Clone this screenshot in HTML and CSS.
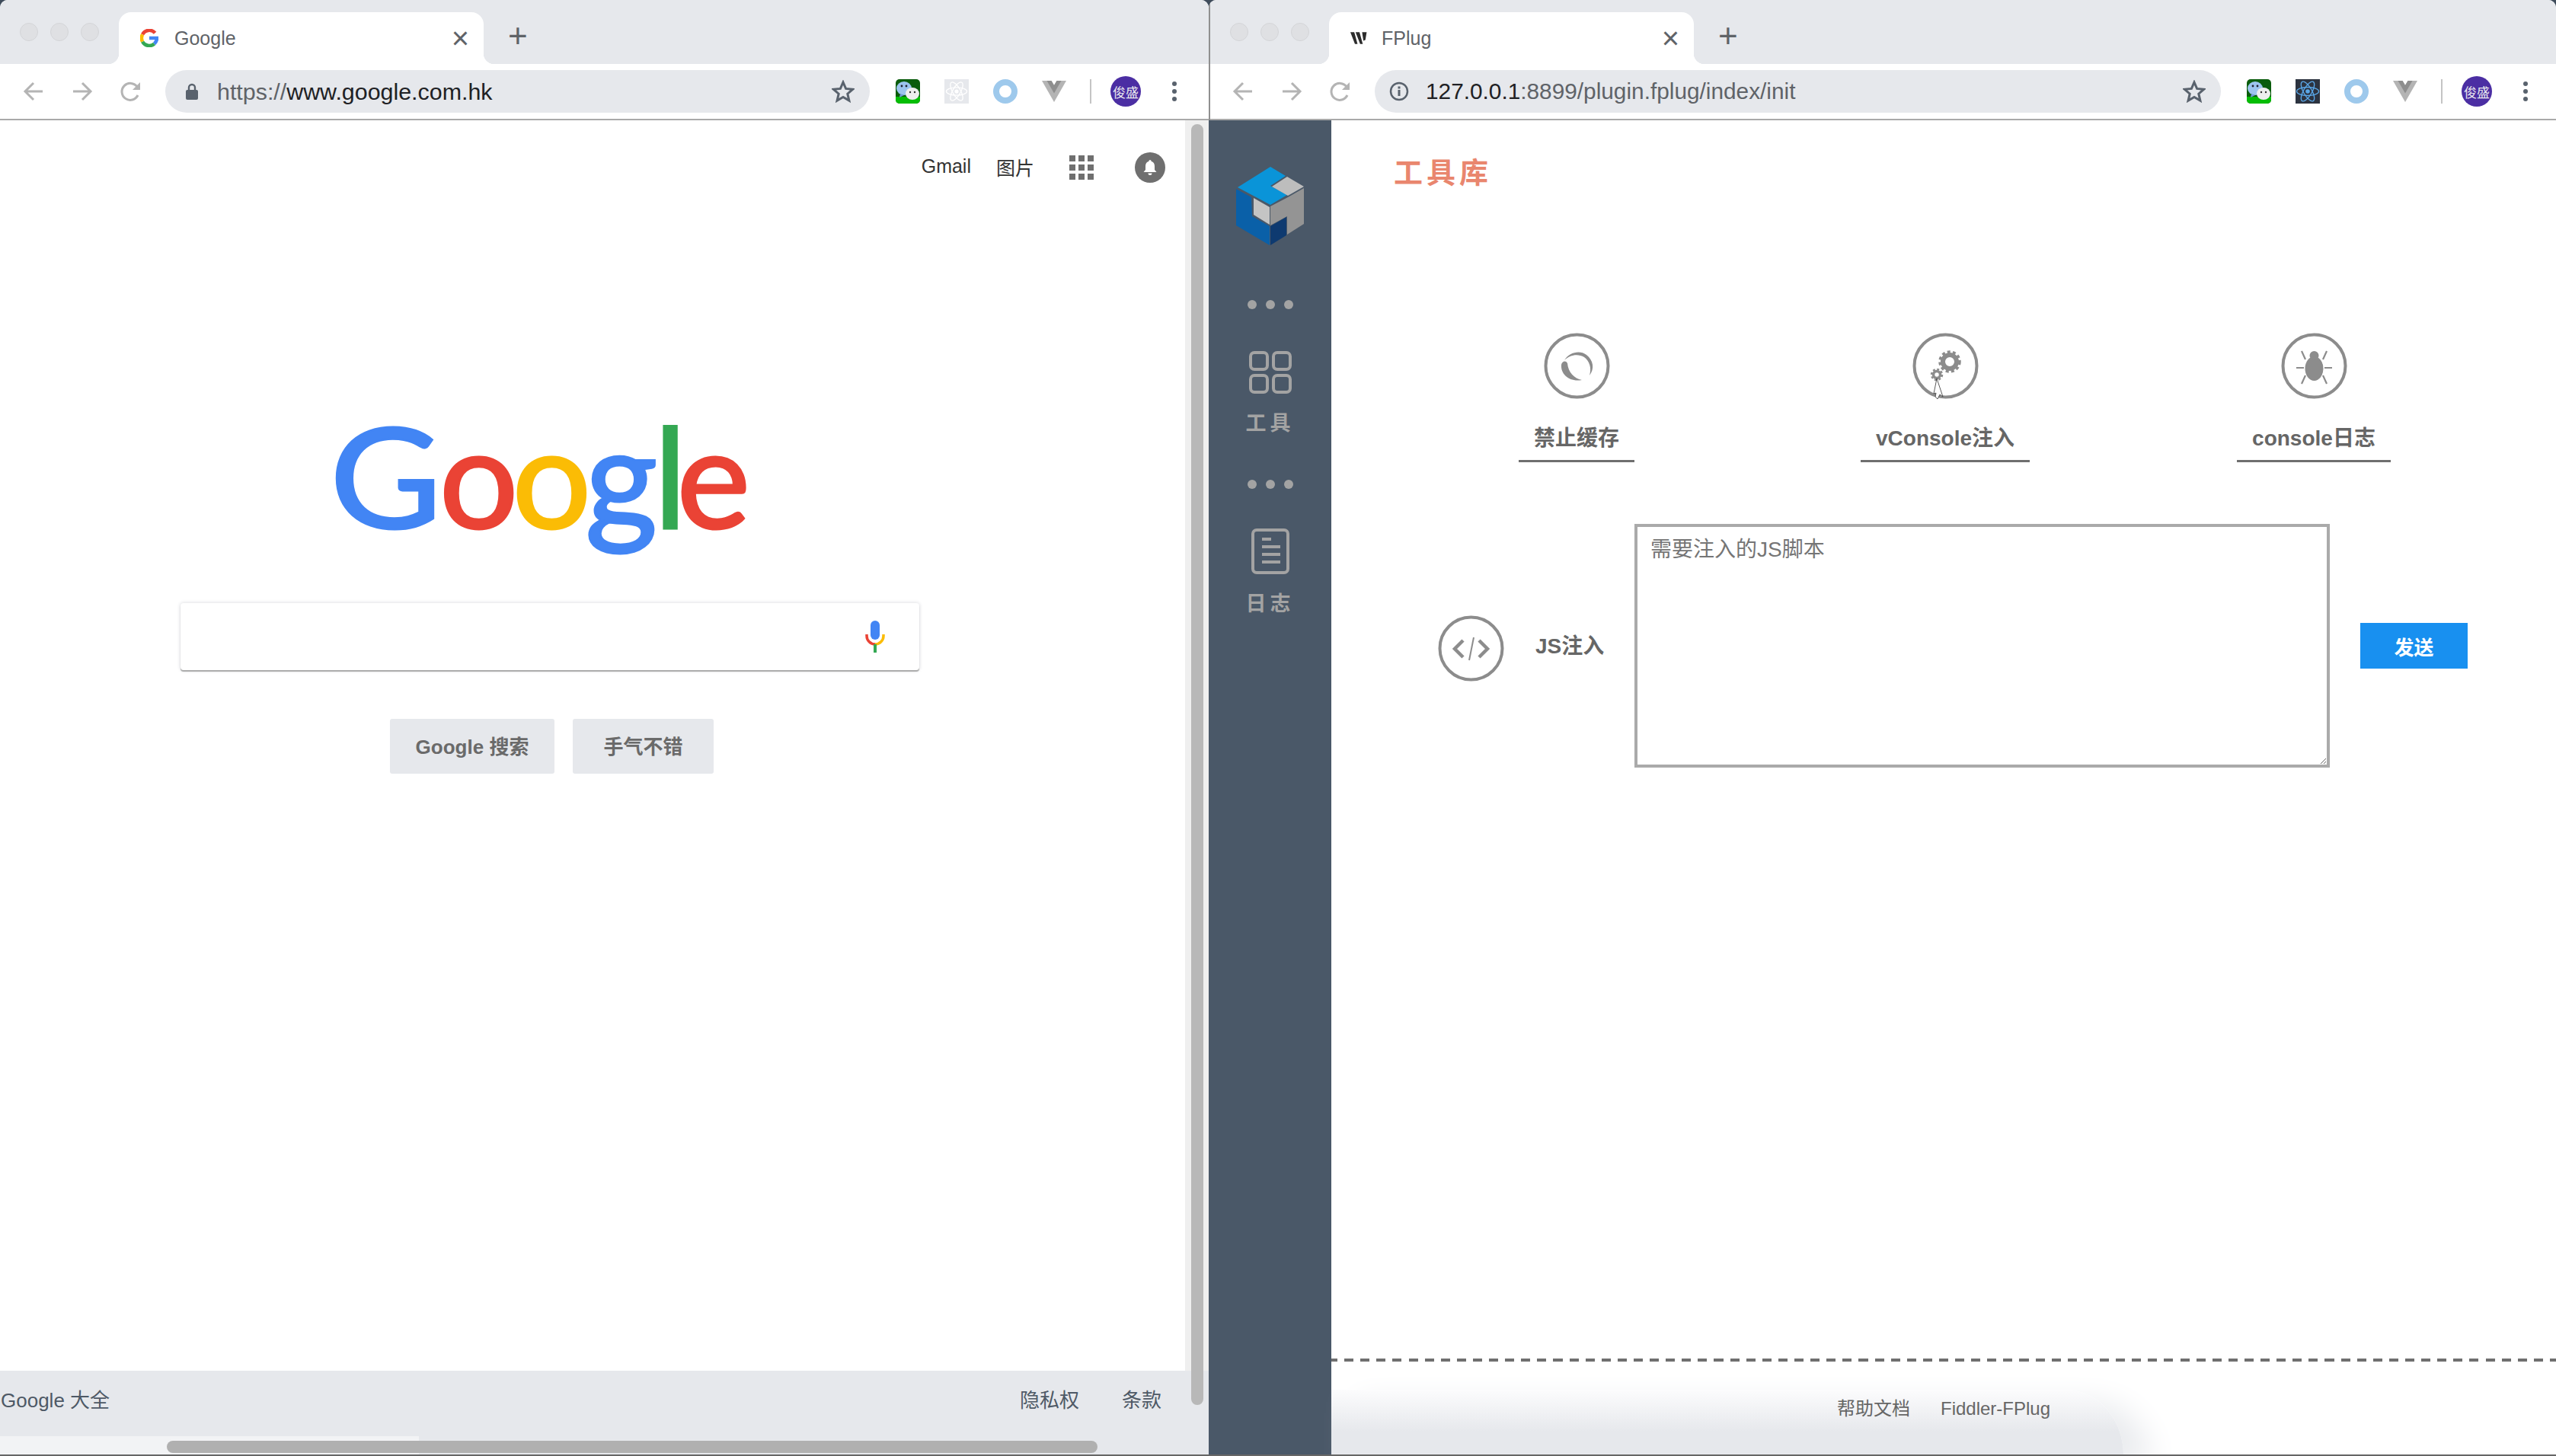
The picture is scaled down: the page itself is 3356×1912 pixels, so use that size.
FILE: index.html
```html
<!DOCTYPE html>
<html lang="zh-CN">
<head>
  <meta charset="UTF-8">
  <title>Google / FPlug</title>
  <link rel="stylesheet" href="styles.css">
</head>
<body>
  <svg class="defs" width="0" height="0">
    <symbol id="i-back" viewBox="0 0 28 28"><path d="M26 14H3M14 3L3 14l11 11" fill="none" stroke="#b4b4b4" stroke-width="3"/></symbol>
    <symbol id="i-forward" viewBox="0 0 28 28"><path d="M2 14h23M14 3l11 11-11 11" fill="none" stroke="#b4b4b4" stroke-width="3"/></symbol>
    <symbol id="i-reload" viewBox="0 0 28 28"><path d="M23 19a11 11 0 1 1-1-11" fill="none" stroke="#b4b4b4" stroke-width="3"/><path d="M26 2v10H16z" fill="#b4b4b4"/></symbol>
    <symbol id="i-star" viewBox="0 0 30 30"><path d="M15 3l3.6 8.4 9.1.8-6.9 6 2.1 8.9-7.9-4.7-7.9 4.7 2.1-8.9-6.9-6 9.1-.8z" fill="none" stroke="#59626d" stroke-width="3"/></symbol>
    <symbol id="i-wechat" viewBox="0 0 32 32">
      <rect width="32" height="32" rx="5" fill="#0a5c0c"/>
      <path d="M0 23h32v4a5 5 0 0 1-5 5H5a5 5 0 0 1-5-5z" fill="#05bd05"/>
      <ellipse cx="11" cy="12" rx="10" ry="9" fill="#9cc4ee"/>
      <path d="M6 19l-1 5 6-3z" fill="#6f9bd6"/>
      <ellipse cx="22" cy="19" rx="9" ry="8" fill="#eeeeee"/>
      <circle cx="8" cy="9" r="1.4" fill="#223"/><circle cx="14" cy="9" r="1.4" fill="#223"/>
      <circle cx="19" cy="17" r="1.2" fill="#333"/><circle cx="25" cy="17" r="1.2" fill="#333"/>
    </symbol>
    <symbol id="i-atom" viewBox="0 0 32 32">
      <g fill="none" stroke="currentColor" stroke-width="1.4">
        <ellipse cx="16" cy="16" rx="14.5" ry="5.5"/>
        <ellipse cx="16" cy="16" rx="14.5" ry="5.5" transform="rotate(60 16 16)"/>
        <ellipse cx="16" cy="16" rx="14.5" ry="5.5" transform="rotate(120 16 16)"/>
      </g>
      <circle cx="16" cy="16" r="2.8" fill="currentColor"/>
    </symbol>
    <symbol id="i-ring" viewBox="0 0 32 32"><circle cx="16" cy="16" r="12" fill="none" stroke="#9ec9ec" stroke-width="8"/></symbol>
    <symbol id="i-vue" viewBox="0 0 32 28">
      <path d="M0 0h12.5L16 6l3.5-6H32L16 28z" fill="#b4b4b4"/>
      <path d="M6.500 0h6L16 6l3.500-6h6L16 16.500z" fill="#8e8e8e"/>
    </symbol>
    <symbol id="i-dots" viewBox="0 0 6 26"><circle cx="3" cy="3" r="3" fill="#59626d"/><circle cx="3" cy="13" r="3" fill="#59626d"/><circle cx="3" cy="23" r="3" fill="#59626d"/></symbol>
  </svg>

  <div class="desktop">
    <!-- 左のウィンドウ -->
    <section class="window win-google">
      <header class="chrome">
        <div class="tabstrip">
          <div class="lights"><i></i><i></i><i></i></div>
          <div class="tab">
            <svg class="favicon" viewBox="0 0 24 24">
              <g fill="none" stroke-width="4.6">
                <path d="M19.600 5.300A10 10 0 0 0 3.100 7.300" stroke="#ea4335"/>
                <path d="M3.100 7.300a10 10 0 0 0 0 9.400" stroke="#fbbc05"/>
                <path d="M3.100 16.700a10 10 0 0 0 15.500 2.800" stroke="#34a853"/>
                <path d="M18.600 19.500A10 10 0 0 0 22 12H12" stroke="#4285f4"/>
              </g>
            </svg>
            <span class="tab-title">Google</span>
            <span class="tab-close">×</span>
          </div>
          <span class="tab-new">+</span>
        </div>
        <div class="toolbar">
          <svg class="nav"><use href="#i-back"/></svg>
          <svg class="nav"><use href="#i-forward"/></svg>
          <svg class="nav"><use href="#i-reload"/></svg>
          <div class="omnibox">
            <svg class="secure" viewBox="0 0 16 22"><path d="M4 9V6a4 4 0 0 1 8 0v3" fill="none" stroke="#59626d" stroke-width="2.400"/><rect x="0" y="9" width="16" height="13" rx="2" fill="#59626d"/></svg>
            <span class="url"><span class="url-scheme">https://</span>www.google.com.hk</span>
            <svg class="star"><use href="#i-star"/></svg>
          </div>
          <svg class="ext"><use href="#i-wechat"/></svg>
          <svg class="ext ext-react-off"><use href="#i-atom"/></svg>
          <svg class="ext"><use href="#i-ring"/></svg>
          <svg class="ext ext-vue"><use href="#i-vue"/></svg>
          <span class="sep"></span>
          <span class="avatar">俊盛</span>
          <svg class="menu"><use href="#i-dots"/></svg>
        </div>
      </header>

      <main class="google-page">
        <nav class="g-top">
          <a>Gmail</a>
          <a class="g-images">图片</a>
          <div class="g-apps"><i></i><i></i><i></i><i></i><i></i><i></i><i></i><i></i><i></i></div>
          <span class="g-bell">
            <svg viewBox="0 0 20 22"><path d="M10 1a1.600 1.600 0 0 1 1.600 1.700C14.500 3.500 16 6 16 9v5l2.500 3h-17L4 14V9c0-3 1.500-5.500 4.400-6.300A1.600 1.600 0 0 1 10 1zM7.500 18.500h5a2.500 2.500 0 0 1-5 0z" fill="#fff"/></svg>
          </span>
        </nav>
        <h1 class="g-logo"><span class="c-blue l-g1">G</span><span class="c-red l-o1">o</span><span class="c-yellow l-o2">o</span><span class="c-blue l-g2">g</span><span class="c-green l-l">l</span><span class="c-red">e</span></h1>
        <div class="g-search">
          <svg class="g-mic" viewBox="0 0 26 42">
            <rect x="7" y="0" width="12" height="25" rx="6" fill="#4285f4"/>
            <path d="M2 18v2a11 11 0 0 0 11 11" fill="none" stroke="#ea4335" stroke-width="3.500"/>
            <path d="M24 18v2a11 11 0 0 1-11 11" fill="none" stroke="#fbbc05" stroke-width="3.500"/>
            <rect x="11" y="31" width="4" height="11" fill="#34a853"/>
          </svg>
        </div>
        <div class="g-buttons">
          <button class="g-btn g-btn-search">Google 搜索</button>
          <button class="g-btn g-btn-lucky">手气不错</button>
        </div>
        <footer class="g-foot">
          <a>Google 大全</a>
          <a class="g-privacy">隐私权</a>
          <a class="g-terms">条款</a>
        </footer>
        <div class="g-vtrack"><div class="g-vthumb"></div></div>
        <div class="g-hthumb"></div>
      </main>
    </section>

    <!-- 右のウィンドウ -->
    <section class="window win-fplug">
      <header class="chrome">
        <div class="tabstrip">
          <div class="lights"><i></i><i></i><i></i></div>
          <div class="tab">
            <svg class="favicon" viewBox="0 0 28 22"><path d="M0 2l6 0 5 18-4 0zM8 2l6 0 5 18-4 0zM18 2h7l-2 12-3 1z" fill="#2c2c2c"/></svg>
            <span class="tab-title tab-title-fplug">FPlug</span>
            <span class="tab-close">×</span>
          </div>
          <span class="tab-new">+</span>
        </div>
        <div class="toolbar">
          <svg class="nav"><use href="#i-back"/></svg>
          <svg class="nav"><use href="#i-forward"/></svg>
          <svg class="nav"><use href="#i-reload"/></svg>
          <div class="omnibox">
            <svg class="info" viewBox="0 0 26 26"><circle cx="13" cy="13" r="11" fill="none" stroke="#59626d" stroke-width="2.500"/><rect x="11.500" y="11" width="3" height="8" fill="#59626d"/><rect x="11.500" y="6.500" width="3" height="3" fill="#59626d"/></svg>
            <span class="url url-fplug">127.0.0.1<span class="url-scheme">:8899/plugin.fplug/index/init</span></span>
            <svg class="star"><use href="#i-star"/></svg>
          </div>
          <svg class="ext"><use href="#i-wechat"/></svg>
          <span class="ext-react"><svg><use href="#i-atom"/></svg></span>
          <svg class="ext"><use href="#i-ring"/></svg>
          <svg class="ext ext-vue"><use href="#i-vue"/></svg>
          <span class="sep"></span>
          <span class="avatar">俊盛</span>
          <svg class="menu"><use href="#i-dots"/></svg>
        </div>
      </header>

      <div class="app">
        <aside class="side">
          <svg class="side-logo" viewBox="0 0 90 104">
            <path d="M2 28L45 1l20 12-20 13 22 12-22 13z" fill="#0a94d8"/>
            <path d="M47 27l20-13 22 13-21 12z" fill="#bdbdbd"/>
            <path d="M89 29v47L67 90V66L45 78V53l23-12z" fill="#949494"/>
            <path d="M23 42l21 12v23L23 64z" fill="#c4c4c4"/>
            <path d="M0 30l20 11 1 25 23 13v25L0 78z" fill="#0a60a8"/>
            <path d="M45 79l21-12v24l-21 13z" fill="#0e3a70"/>
          </svg>
          <div class="side-dots side-dots-first"><i></i><i></i><i></i></div>
          <div class="side-item">
            <div class="side-grid"><i></i><i></i><i></i><i></i></div>
            <span>工具</span>
          </div>
          <div class="side-dots"><i></i><i></i><i></i></div>
          <div class="side-item">
            <svg class="side-doc" viewBox="0 0 50 60">
              <rect x="2" y="2" width="46" height="56" rx="5" fill="none" stroke="#a3a3a3" stroke-width="4"/>
              <path d="M14 14h12M14 24h24M14 34h24M14 44h24" stroke="#a3a3a3" stroke-width="4"/>
            </svg>
            <span>日志</span>
          </div>
        </aside>

        <main class="tools">
          <h2 class="tools-title">工具库</h2>
          <div class="tool-row">
            <div class="tool">
              <svg class="circle-icon" viewBox="0 0 87 87">
                <circle cx="43.500" cy="43.500" r="41" fill="none" stroke="#8c8c8c" stroke-width="4"/>
                <path d="M23 42C22 55 34 65 50 62 40 60 32 52 31 40 29 36 24 37 23 42z" fill="#8c8c8c"/>
                <path d="M27 36C33 26 47 22 56 29 65 36 67 47 60 56 63 46 60 37 53 32 45 27 34 29 27 36z" fill="#8c8c8c"/>
              </svg>
              <span class="tool-name">禁止缓存</span>
            </div>
            <div class="tool">
              <svg class="circle-icon" viewBox="0 0 87 87">
                <circle cx="43.500" cy="43.500" r="41" fill="none" stroke="#8c8c8c" stroke-width="4"/>
                <circle cx="49" cy="38" r="9" fill="none" stroke="#8c8c8c" stroke-width="6"/>
                <circle cx="49" cy="38" r="13" fill="none" stroke="#8c8c8c" stroke-width="3.500" stroke-dasharray="4 3.200"/>
                <circle cx="32" cy="55" r="4.500" fill="none" stroke="#8c8c8c" stroke-width="3.500"/>
                <circle cx="32" cy="55" r="7" fill="none" stroke="#8c8c8c" stroke-width="2.500" stroke-dasharray="3 2.500"/>
                <path d="M32 60l8 24-4-3-3 6-3-3 1-5-3 1z" fill="#fff" stroke="#333" stroke-width=".8"/>
              </svg>
              <span class="tool-name">vConsole注入</span>
            </div>
            <div class="tool">
              <svg class="circle-icon" viewBox="0 0 87 87">
                <circle cx="43.500" cy="43.500" r="41" fill="none" stroke="#8c8c8c" stroke-width="4"/>
                <ellipse cx="43.500" cy="47" rx="12" ry="16" fill="#8c8c8c"/>
                <circle cx="43.500" cy="30" r="6" fill="#8c8c8c"/>
                <path d="M32 35l-5-11M55 35l5-11M30 46H20M57 46h10M32 56l-5 11M55 56l5 11" fill="none" stroke="#8c8c8c" stroke-width="2.200"/>
              </svg>
              <span class="tool-name">console日志</span>
            </div>
          </div>

          <div class="js-row">
            <svg class="circle-icon js-icon" viewBox="0 0 87 87">
              <circle cx="43.500" cy="43.500" r="41" fill="none" stroke="#8c8c8c" stroke-width="4"/>
              <path d="M33 33L22 44l11 11M54 33l11 11-11 11" fill="none" stroke="#8c8c8c" stroke-width="4.500"/>
              <path d="M47 29l-6 30" fill="none" stroke="#8c8c8c" stroke-width="2"/>
            </svg>
            <label class="js-label" for="script">JS注入</label>
            <textarea class="js-input" id="script">需要注入的JS脚本</textarea>
            <button class="js-send">发送</button>
          </div>

          <footer class="tools-foot">
            <a>帮助文档</a>
            <a>Fiddler-FPlug</a>
          </footer>
        </main>
      </div>
    </section>
  </div>
</body>
</html>
```

FILE: styles.css
```css
/* ページ全体 */
* {
  box-sizing: border-box;
}

body {
  margin: 0;
  width: 3356px;
  height: 1912px;
  overflow: hidden;
  background-color: #3f4c5b;
  font-family: "Liberation Sans", "Noto Sans CJK SC", sans-serif;
  color: #666;
}

.defs {
  position: absolute;
}

.desktop {
  display: flex;
  height: 100%;
}

.window {
  display: flex;
  flex-direction: column;
  height: 100%;
  overflow: hidden;
  border-radius: 10px 10px 0 0;
  border-bottom: 2px solid #666;
}

.win-google {
  width: 1587px;
}

.win-fplug {
  flex: 1;
}

/* タブとツールバー */
.chrome {
  background-color: #fff;
}

.win-fplug .chrome {
  border-left: 2px solid #8f8f8f;
}

.tabstrip {
  display: flex;
  align-items: center;
  height: 84px;
  background-color: #e6e8ec;
}

.lights {
  display: flex;
  gap: 16px;
  margin-left: 26px;
}

.lights i {
  width: 24px;
  height: 24px;
  border-radius: 50%;
  border: 1px solid #d4d5d8;
  background-color: #dfe0e3;
}

.tab {
  position: relative;
  display: flex;
  align-items: center;
  align-self: flex-end;
  width: 479px;
  height: 68px;
  margin-left: 26px;
  padding-left: 28px;
  background-color: #fff;
  border-radius: 16px 16px 0 0;
}

.tab::before,
.tab::after {
  content: "";
  position: absolute;
  bottom: 0;
  width: 14px;
  height: 14px;
}

.tab::before {
  left: -14px;
  background: radial-gradient(circle at 0 0, #e6e8ec 14px, #fff 14.5px);
}

.tab::after {
  right: -14px;
  background: radial-gradient(circle at 100% 0, #e6e8ec 14px, #fff 14.5px);
}

.favicon {
  width: 24px;
  height: 24px;
  flex: none;
}

.tab-title {
  margin-left: 21px;
  font-size: 25px;
  color: #5f6368;
}

.tab-title-fplug {
  margin-left: 17px;
}

.tab-close {
  margin-left: auto;
  margin-right: 19px;
  font-size: 40px;
  line-height: 40px;
  color: #5f6368;
}

.tab-new {
  margin-left: 32px;
  margin-top: 10px;
  font-size: 44px;
  line-height: 44px;
  color: #5f6368;
}

.toolbar {
  display: flex;
  align-items: center;
  height: 74px;
  padding-left: 11px;
  padding-right: 37px;
  border-bottom: 2px solid #a9a9a9;
}

.win-google .toolbar {
  padding-left: 12px;
  padding-right: 42px;
}

.nav {
  width: 28px;
  height: 28px;
  margin: 0 18px;
  flex: none;
}

.omnibox {
  display: flex;
  align-items: center;
  flex: 1;
  height: 56px;
  margin-left: 13px;
  padding-left: 27px;
  padding-right: 20px;
  background-color: #e6e8ec;
  border-radius: 28px;
}

.secure {
  width: 16px;
  height: 22px;
  flex: none;
}

.info {
  width: 26px;
  height: 26px;
  flex: none;
  margin-left: -8px;
}

.url {
  margin-left: 25px;
  font-size: 30.400px;
  color: #202124;
}

.url-fplug {
  margin-left: 22px;
  font-size: 29.800px;
}

.url-scheme {
  color: #5f6368;
}

.star {
  width: 30px;
  height: 30px;
  margin-left: auto;
}

.ext {
  width: 32px;
  height: 32px;
  flex: none;
  margin-left: 32px;
}

.omnibox + .ext {
  margin-left: 34px;
}

.ext-react-off {
  padding: 1px;
  background-color: #e6e8ec;
  color: #fff;
}

.ext-react {
  display: flex;
  width: 32px;
  height: 32px;
  flex: none;
  margin-left: 32px;
  background-color: #2c3340;
  color: #5aa7e8;
}

.ext-react svg {
  width: 32px;
  height: 32px;
}

.ext-vue {
  height: 28px;
}

.sep {
  width: 2px;
  height: 32px;
  margin-left: 31px;
  background-color: #c4c4c4;
}

.avatar {
  display: flex;
  align-items: center;
  justify-content: center;
  width: 40px;
  height: 40px;
  flex: none;
  margin-left: 25px;
  border-radius: 50%;
  background-color: #4b2ea3;
  color: #e8e8ee;
  font-size: 17px;
}

.menu {
  width: 6px;
  height: 26px;
  flex: none;
  margin-left: 41px;
}

/* Google のページ */
.google-page {
  position: relative;
  display: flex;
  flex-direction: column;
  flex: 1;
  background-color: #fff;
  color: #333;
}

.g-top {
  display: flex;
  align-items: center;
  height: 40px;
  margin-top: 42px;
  padding-right: 57px;
  justify-content: flex-end;
  font-size: 25px;
}

.g-top a {
  margin-bottom: 3px;
}

.g-images {
  margin-left: 33px;
  font-size: 25px;
}

.g-apps {
  display: grid;
  grid-template-columns: repeat(3, 8px);
  grid-auto-rows: 8px;
  gap: 4px;
  margin-left: 46px;
}

.g-apps i {
  background-color: #6f6f6f;
}

.g-bell {
  display: flex;
  align-items: center;
  justify-content: center;
  width: 40px;
  height: 40px;
  margin-left: 54px;
  border-radius: 50%;
  background-color: #6f6f6f;
}

.g-bell svg {
  width: 20px;
  height: 22px;
}

.g-logo {
  display: flex;
  align-items: baseline;
  height: 295px;
  margin: 245px 0 0 433px;
  font-family: Lato, sans-serif;
  font-size: 183px;
  line-height: 276px;
  font-weight: 400;
  -webkit-text-stroke: 3px currentColor;
}

/* ロゴの文字を1文字ずつ詰める */
.l-g1 {
  margin-right: 10px;
  transform: scaleX(1.100);
  transform-origin: left center;
}

.l-o1,
.l-o2 {
  letter-spacing: -8px;
}

.l-g2 {
  letter-spacing: -5px;
}

.l-l {
  letter-spacing: -13px;
}

.c-blue {
  color: #4285f4;
}

.c-red {
  color: #ea4335;
}

.c-yellow {
  color: #fbbc05;
}

.c-green {
  color: #34a853;
}

.g-search {
  display: flex;
  align-items: center;
  justify-content: flex-end;
  width: 970px;
  height: 88px;
  margin: 12px 0 0 237px;
  padding-right: 45px;
  border-radius: 4px;
  box-shadow: 0 2px 1px #aaa, 0 0 4px 1px #e2e3e6;
}

.g-mic {
  width: 26px;
  height: 42px;
}

.g-buttons {
  display: flex;
  gap: 24px;
  margin: 64px 0 0 512px;
}

.g-btn {
  height: 72px;
  padding: 0 0 4px;
  border: none;
  border-radius: 3px;
  background-color: #e6e8ec;
  font-family: inherit;
  font-size: 26px;
  font-weight: 700;
  color: #6a6a6a;
}

.g-btn-search {
  width: 216px;
}

.g-btn-lucky {
  width: 185px;
}

.g-foot {
  display: flex;
  align-items: center;
  height: 110px;
  margin-top: auto;
  padding: 0 0 38px 1px;
  background: linear-gradient(#f2f3f5, #f2f3f5) no-repeat 0 100% / 550px 24px, #e6e8ec;
  font-size: 26px;
  color: #4e5966;
}

.g-privacy {
  margin-left: auto;
}

.g-terms {
  margin-left: 56px;
  margin-right: 62px;
}

/* スクロールバーは内容の上に重なる */
.g-vtrack {
  position: absolute;
  top: 0;
  right: 0;
  width: 31px;
  height: 1642px;
  padding: 5px 7px 0 8px;
  background-color: #efefef;
}

.g-vthumb {
  height: 1682px;
  border-radius: 8px;
  background-color: #b8b8b8;
}

.g-hthumb {
  position: absolute;
  left: 219px;
  bottom: 2px;
  width: 1222px;
  height: 16px;
  border-radius: 8px;
  background-color: #b0b0b0;
}

/* FPlug のページ */
.app {
  display: flex;
  flex: 1;
  background-color: #fff;
}

.side {
  display: flex;
  flex-direction: column;
  align-items: center;
  width: 161px;
  padding-top: 60px;
  background-color: #4a5868;
  color: #a3a3a3;
}

.side-logo {
  width: 90px;
  height: 104px;
  flex: none;
}

.side-dots {
  display: flex;
  gap: 12px;
  margin-top: 58px;
}

.side-dots-first {
  margin-top: 72px;
}

.side-dots i {
  width: 12px;
  height: 12px;
  border-radius: 50%;
  background-color: #a3a3a3;
}

.side-item {
  display: flex;
  flex-direction: column;
  align-items: center;
  margin-top: 55px;
  font-size: 27px;
  font-weight: 700;
  line-height: 32px;
  letter-spacing: 5px;
}

.side-item span {
  margin-top: 23px;
}

.side-grid {
  display: grid;
  grid-template-columns: 26px 26px;
  grid-auto-rows: 26px;
  gap: 4px;
}

.side-grid i {
  border: 4px solid #a3a3a3;
  border-radius: 7px;
}

.side-doc {
  width: 50px;
  height: 60px;
  margin-top: -3px;
}

.tools {
  display: flex;
  flex-direction: column;
  flex: 1;
}

.tools-title {
  margin: 0;
  padding: 46px 0 0 82px;
  font-size: 38px;
  line-height: 46px;
  font-weight: 700;
  letter-spacing: 5px;
  color: #e9866e;
}

.tool-row {
  display: flex;
  margin-top: 187px;
  padding-left: 80px;
}

.tool {
  display: flex;
  flex-direction: column;
  align-items: center;
  width: 484px;
}

.circle-icon {
  width: 87px;
  height: 87px;
  flex: none;
  overflow: visible;
}

.tool-name {
  margin-top: 34px;
  padding: 0 20px 10px;
  border-bottom: 3px solid #6f6f6f;
  font-size: 28px;
  line-height: 36px;
  font-weight: 700;
  color: #666;
}

.js-row {
  display: flex;
  align-items: center;
  margin-top: 81px;
  padding-left: 140px;
}

.js-icon {
  margin-top: 6px;
}

.js-label {
  width: 171px;
  padding: 0 0 4px 41px;
  font-size: 28px;
  font-weight: 700;
  color: #666;
  white-space: nowrap;
}

.js-input {
  width: 913px;
  height: 320px;
  padding: 13px 17px;
  border: 4px solid #aaa;
  border-radius: 0;
  outline: none;
  font-family: inherit;
  font-size: 28px;
  line-height: 34px;
  color: #757575;
}

.js-send {
  width: 141px;
  height: 60px;
  margin-left: 40px;
  padding: 0;
  border: none;
  background-color: #1890f0;
  font-family: inherit;
  font-size: 26px;
  font-weight: 700;
  color: #fff;
}

.tools-foot {
  position: relative;
  display: flex;
  justify-content: center;
  gap: 40px;
  margin-top: auto;
  height: 126px;
  padding: 47px 0 0;
  border-top: 4px solid transparent;
  border-image: repeating-linear-gradient(90deg, #6f6f6f 0 12px, transparent 12px 21px) 4;
  font-size: 24px;
  line-height: 30px;
  color: #666;
}

/* 下のほうの薄い影 */
.tools-foot::before {
  content: "";
  position: absolute;
  left: 0;
  bottom: 0;
  width: 1040px;
  height: 85px;
  border-top-right-radius: 80px 90px;
  background: linear-gradient(#fcfcfd, #e6e8ec 65%);
  box-shadow: 36px 16px 40px #e9ebee;
}

.tools-foot a {
  position: relative;
}
```
